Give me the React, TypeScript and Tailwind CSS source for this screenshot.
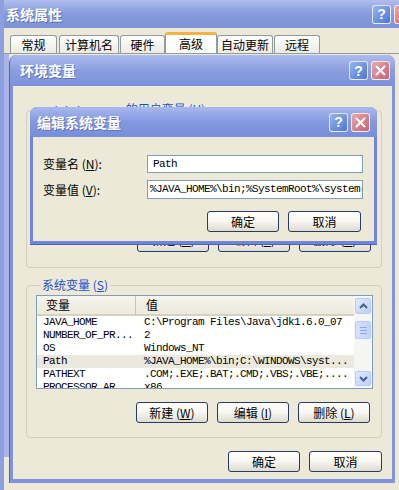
import React from 'react'

const mono = "font-['Liberation_Mono',monospace] text-[11px] tracking-[-0.6px]"

function HelpButton() {
  return (
    <div className="flex h-[19px] w-[19px] shrink-0 items-center justify-center rounded-[3px] border border-white/80 bg-gradient-to-br from-[#97b4f2] to-[#4c74d8] font-['Liberation_Sans',sans-serif] text-[14px] font-bold leading-none text-white">
      ?
    </div>
  )
}

function CloseButton() {
  return (
    <div className="flex h-[19px] w-[19px] shrink-0 items-center justify-center rounded-[3px] border border-white/80 bg-gradient-to-br from-[#e6a6ae] to-[#c46472]">
      <svg width="11" height="11" viewBox="0 0 11 11">
        <path d="M1.5 1.5l8 8M9.5 1.5l-8 8" stroke="white" strokeWidth="2" strokeLinecap="round" />
      </svg>
    </div>
  )
}

function XpButton({ children, className = '' }: { children: React.ReactNode; className?: string }) {
  return (
    <div
      className={`flex h-[21px] shrink-0 items-center justify-center rounded-[3px] border border-[#2a3a66] bg-gradient-to-b from-white via-[#f7f6f1] to-[#dedbcf] text-[12px] leading-none text-black ${className}`}
    >
      {children}
    </div>
  )
}

const tabs = [
  { label: '常规', cls: 'w-[47px] mr-[2px]' },
  { label: '计算机名', cls: 'w-[60px] mr-[1px]' },
  { label: '硬件', cls: 'w-[45px]' },
  { label: '高级', cls: 'w-[52px]', active: true },
  { label: '自动更新', cls: 'w-[56px] mr-[1px]' },
  { label: '远程', cls: 'w-[46px]' }
]

const rows = [
  { name: 'JAVA_HOME', value: 'C:\\Program Files\\Java\\jdk1.6.0_07' },
  { name: 'NUMBER_OF_PR...', value: '2' },
  { name: 'OS', value: 'Windows_NT' },
  { name: 'Path', value: '%JAVA_HOME%\\bin;C:\\WINDOWS\\syst...', selected: true },
  { name: 'PATHEXT', value: '.COM;.EXE;.BAT;.CMD;.VBS;.VBE;....' },
  { name: 'PROCESSOR_AR...', value: 'x86' }
]

function Chevron({ up }: { up?: boolean }) {
  return (
    <svg width="9" height="6" viewBox="0 0 9 6">
      <path d={up ? 'M1 5l3.5-3.5L8 5' : 'M1 1l3.5 3.5L8 1'} fill="none" stroke="#4d6185" strokeWidth="2" />
    </svg>
  )
}

export default function App() {
  return (
    <div className="relative h-[490px] w-[399px] overflow-hidden bg-[#ece9d8] font-['Noto_Sans_CJK_SC',sans-serif] text-[12px] text-black">
      {/* 系统属性 window behind */}
      <div className="flex h-full w-[420px] flex-col border-l-[4px] border-[#8d9fe0]">
        <div className="flex h-[28px] shrink-0 items-center gap-[3px] bg-gradient-to-b from-[#b0bdee] via-[#869bdd] to-[#7d93d9] pl-[2px] pr-[7px]">
          <span className="mr-auto text-[14px] font-bold text-white [text-shadow:1px_1px_0_#5d72ba]">系统属性</span>
          <HelpButton />
          <CloseButton />
        </div>
        <div className="flex h-[26px] shrink-0 items-end border-b border-[#919b9c] pl-[6px]">
          {tabs.map((t) =>
            t.active ? (
              <div
                key={t.label}
                className={`flex h-[21px] items-center justify-center rounded-t-[3px] border-x border-t-[3px] border-x-[#919b9c] border-t-[#f4b33f] bg-[#fcfcfa] ${t.cls}`}
              >
                {t.label}
              </div>
            ) : (
              <div
                key={t.label}
                className={`flex h-[18px] items-center justify-center rounded-t-[3px] border-x border-t border-[#919b9c] bg-gradient-to-b from-white to-[#ecebe4] ${t.cls}`}
              >
                {t.label}
              </div>
            )
          )}
        </div>
        <div className="mb-[33px] flex-1 border-l-[5px] border-[#aab4e5]" />
      </div>

      {/* 环境变量 window */}
      <div className="absolute left-[9px] top-[55px] flex h-[428px] w-[386px] flex-col overflow-hidden rounded-t-[8px] border-l border-[#4f62c0] bg-[#8093dc]">
        <div className="flex h-[31px] shrink-0 items-center gap-[3px] bg-gradient-to-b from-[#adbbee] via-[#8a9ede] to-[#7d92da] pl-[10px] pr-[5px]">
          <span className="mr-auto text-[14px] font-bold text-white [text-shadow:1px_1px_0_#5d72ba]">环境变量</span>
          <HelpButton />
          <CloseButton />
        </div>
        <div className="mx-[3px] mb-[4px] flex flex-1 flex-col bg-[#ece9d8] pl-[13px]">
          {/* user variables, mostly hidden */}
          <fieldset className="mt-[16px] w-[356px] rounded-[4px] border border-[#d0d0bf] px-[10px] pb-[15px]">
            <legend className="ml-[6px] px-[2px] leading-[14px] text-[#1c4fd0]">
              <span className={mono}>Administrator</span> 的用户变量 (<u>U</u>)
            </legend>
            <div className="mt-[4px] h-[96px] border border-[#7f9db9] bg-white" />
            <div className="mt-[13px] flex justify-end gap-[9px]">
              <XpButton className="w-[72px] pb-[4px]">新建 (<u>N</u>)</XpButton>
              <XpButton className="w-[72px] pb-[4px]">编辑 (<u>E</u>)</XpButton>
              <XpButton className="w-[72px] pb-[4px]">删除 (<u>D</u>)</XpButton>
            </div>
          </fieldset>

          {/* system variables */}
          <fieldset className="mt-[10px] w-[356px] rounded-[4px] border border-[#d0d0bf] pb-[14px] pl-[9px] pr-[8px]">
            <legend className="ml-[4px] px-[2px] leading-[14px] text-[#1c4fd0]">
              系统变量 (<u>S</u>)
            </legend>
            <div className="mt-[3px] flex h-[94px] border border-[#7f9db9] bg-white">
              <div className="flex flex-1 flex-col overflow-hidden">
                <div className="flex h-[20px] shrink-0 items-center border-b-2 border-[#d6d2c2] bg-gradient-to-b from-[#f6f5ef] to-[#ebeadb]">
                  <div className="flex h-full w-[99px] items-center border-r border-[#c7c5b8] pl-[9px]">变量</div>
                  <div className="pl-[10px]">值</div>
                </div>
                {rows.map((r) => (
                  <div
                    key={r.name}
                    className={`flex h-[13px] shrink-0 items-center leading-[13px] ${mono} ${r.selected ? 'bg-[#ebe9df]' : 'bg-white'}`}
                  >
                    <div className="w-[100px] shrink-0 pl-[6px]">{r.name}</div>
                    <div className="pl-[7px] whitespace-nowrap">{r.value}</div>
                  </div>
                ))}
              </div>
              <div className="flex w-[18px] shrink-0 flex-col items-center bg-[#f5f5f1] px-[1px] py-[2px]">
                <div className="flex h-[16px] w-[16px] items-center justify-center rounded-[2px] border border-[#b8cbf5] bg-gradient-to-br from-[#e0e8fe] to-[#bccefa]">
                  <Chevron up />
                </div>
                <div className="mt-[7px] flex h-[18px] w-[16px] flex-col items-center justify-center gap-[2px] rounded-[2px] border border-[#b8cbf5] bg-gradient-to-r from-[#d6e1fd] to-[#c2d2fb]">
                  <div className="h-[1px] w-[7px] bg-[#8ca6e6]" />
                  <div className="h-[1px] w-[7px] bg-[#8ca6e6]" />
                  <div className="h-[1px] w-[7px] bg-[#8ca6e6]" />
                </div>
                <div className="flex-1" />
                <div className="flex h-[15px] w-[16px] items-center justify-center rounded-[2px] border border-[#b8cbf5] bg-gradient-to-br from-[#e0e8fe] to-[#bccefa]">
                  <Chevron />
                </div>
              </div>
            </div>
            <div className="mt-[13px] flex justify-end gap-[9px] pr-[3px]">
              <XpButton className="w-[72px]">新建 (<u>W</u>)</XpButton>
              <XpButton className="w-[72px]">编辑 (<u>I</u>)</XpButton>
              <XpButton className="w-[72px]">删除 (<u>L</u>)</XpButton>
            </div>
          </fieldset>

          <div className="mt-[13px] flex w-[356px] justify-end gap-[9px]">
            <XpButton className="w-[72px]">确定</XpButton>
            <XpButton className="w-[73px]">取消</XpButton>
          </div>
        </div>
      </div>

      {/* 编辑系统变量 dialog */}
      <div className="absolute left-[30px] top-[107px] flex h-[137px] w-[347px] flex-col overflow-hidden rounded-t-[7px] bg-[#7286d9] shadow-[0_1px_0_#4d5fbf]">
        <div className="flex h-[30px] shrink-0 items-center gap-[3px] bg-gradient-to-b from-[#a9b8ee] via-[#8398de] to-[#788ed9] pl-[7px] pr-[7px]">
          <span className="mr-auto text-[14px] font-bold text-white [text-shadow:1px_1px_0_#5d72ba]">编辑系统变量</span>
          <HelpButton />
          <CloseButton />
        </div>
        <div className="mx-[3px] mb-[3px] flex flex-1 flex-col bg-[#ece9d8] pl-[10px] pt-[18px]">
          <div className="flex h-[18px] items-center">
            <div className="w-[104px]">变量名 (<u>N</u>):</div>
            <div className={`flex h-full w-[216px] items-center border border-[#7f9db9] bg-white pl-[5px] ${mono}`}>Path</div>
          </div>
          <div className="mt-[7px] flex h-[19px] items-center">
            <div className="w-[104px]">变量值 (<u>V</u>):</div>
            <div className={`flex h-full w-[216px] items-center overflow-hidden whitespace-nowrap border border-[#7f9db9] bg-white pl-[2px] ${mono}`}>
              %JAVA_HOME%\bin;%SystemRoot%\system(
            </div>
          </div>
          <div className="mt-[12px] flex w-[318px] justify-end gap-[9px]">
            <XpButton className="h-[20px] w-[72px]">确定</XpButton>
            <XpButton className="h-[20px] w-[73px]">取消</XpButton>
          </div>
        </div>
      </div>
    </div>
  )
}
